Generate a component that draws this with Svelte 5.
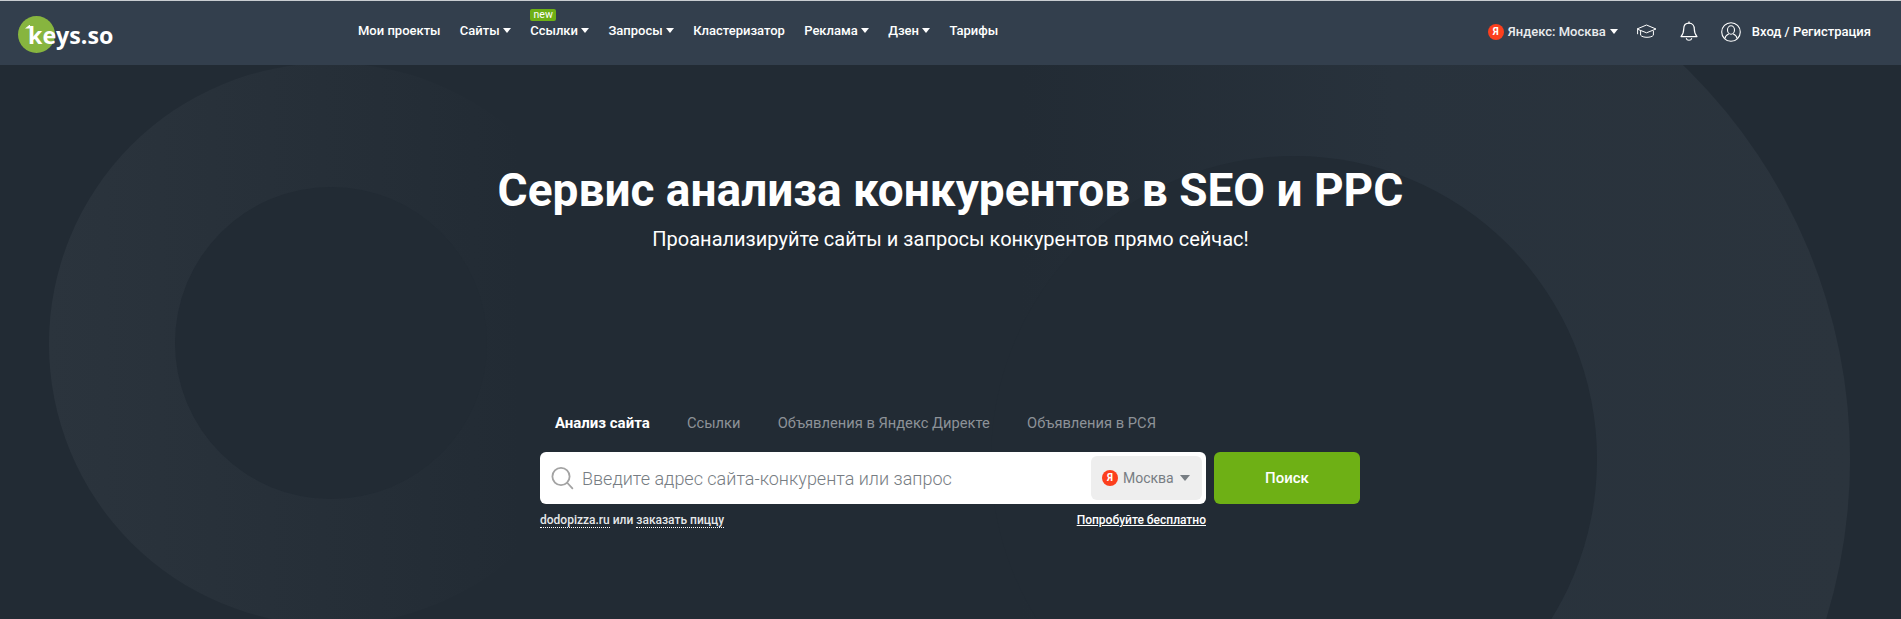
<script>
  const nav = [
    { label: "Мои проекты" },
    { label: "Сайты", caret: true },
    { label: "Ссылки", caret: true, badge: "new" },
    { label: "Запросы", caret: true },
    { label: "Кластеризатор" },
    { label: "Реклама", caret: true },
    { label: "Дзен", caret: true },
    { label: "Тарифы" },
  ];
  const tabs = ["Анализ сайта", "Ссылки", "Объявления в Яндекс Директе", "Объявления в РСЯ"];
</script>

<header class="topbar">
  <a class="logo" href="#top">
    <span class="logo-dot"></span>
    <span class="logo-flag"></span>
    <span class="logo-text">keys.so</span>
  </a>

  <nav class="menu">
    {#each nav as item}
      <a class="menu-item" href="#top">
        {#if item.badge}<span class="badge">{item.badge}</span>{/if}
        {item.label}
        {#if item.caret}<span class="caret"></span>{/if}
      </a>
    {/each}
  </nav>

  <div class="account">
    <span class="region">
      <span class="ya">Я</span>
      Яндекс: Москва
      <span class="caret"></span>
    </span>
    <svg class="hat" width="21" height="15" viewBox="0 0 21 15" fill="none" stroke="#fff" stroke-width="1">
      <path d="M10.5 1 1 5l9.5 3.8L20 5z" stroke-linejoin="round" />
      <path d="M4.6 6.8v4.4c2 2.8 10.8 2.8 12.8 0V6.8" />
      <path d="M1.6 5.4v4.8" />
    </svg>
    <svg class="bell" width="18" height="21" viewBox="0 0 18 21" fill="none" stroke="#fff" stroke-width="1.2">
      <path d="M9 2.2c-3.4 0-5.3 2.6-5.3 5.8 0 4-1 5.8-2.7 7.6h16c-1.7-1.8-2.7-3.6-2.7-7.6 0-3.2-1.9-5.8-5.3-5.8z" stroke-linejoin="round" />
      <path d="M9 .8v1.4M6.4 17.6c.5 2.2 4.7 2.2 5.2 0" stroke-linecap="round" />
    </svg>
    <svg class="user" width="20" height="20" viewBox="0 0 20 20" fill="none" stroke="#fff" stroke-width="1.1">
      <circle cx="10" cy="10" r="9.3" />
      <ellipse cx="10" cy="8" rx="3.5" ry="4.2" />
      <path d="M3.8 16.6c.6-2.8 2.4-4 4-4.6M16.2 16.6c-.6-2.8-2.4-4-4-4.6" />
    </svg>
    <a class="login" href="#top">Вход / Регистрация</a>
  </div>
</header>

<main class="hero">
  <svg class="rings" width="1901" height="554" viewBox="0 65 1901 554" fill="none" aria-hidden="true">
    <defs>
      <linearGradient id="fade-left" gradientUnits="userSpaceOnUse" x1="49" y1="0" x2="520" y2="0">
        <stop offset="0" stop-color="#2b343d" />
        <stop offset="0.35" stop-color="#28313a" />
        <stop offset="0.7" stop-color="#252e37" />
        <stop offset="1" stop-color="#222b34" />
      </linearGradient>
      <linearGradient id="fade-right" gradientUnits="userSpaceOnUse" x1="1850" y1="0" x2="1020" y2="0">
        <stop offset="0" stop-color="#2b343d" />
        <stop offset="0.55" stop-color="#28323c" />
        <stop offset="1" stop-color="#222b34" />
      </linearGradient>
    </defs>
    <circle cx="330" cy="344" r="281" fill="url(#fade-left)" />
    <circle cx="331" cy="343" r="156" fill="#222b34" />
    <circle cx="1302" cy="459" r="548" fill="url(#fade-right)" />
    <circle cx="1294" cy="459" r="303" fill="#222b34" />
  </svg>

  <div class="intro">
    <h1>Сервис анализа конкурентов в SEO и PPC</h1>
    <p>Проанализируйте сайты и запросы конкурентов прямо сейчас!</p>
  </div>

  <section class="finder">
    <div class="tabs">
      {#each tabs as tab, i}
        <span class="tab" class:active={i === 0}>{tab}</span>
      {/each}
    </div>

    <div class="search-row">
      <div class="search">
        <svg width="23" height="24" viewBox="0 0 23 24" fill="none" stroke="#a3a3a3" stroke-width="1.8">
          <circle cx="10" cy="10.5" r="8.6" />
          <path d="m16.4 17 5 5.4" stroke-linecap="round" />
        </svg>
        <input type="text" placeholder="Введите адрес сайта-конкурента или запрос" />
        <div class="city">
          <span class="ya">Я</span>
          <span>Москва</span>
          <span class="city-caret"></span>
        </div>
      </div>
      <button class="go">Поиск</button>
    </div>

    <div class="hints">
      <span><a class="dotted" href="#top">dodopizza.ru</a> или <a class="dotted" href="#top">заказать пиццу</a></span>
      <a class="try" href="#top">Попробуйте бесплатно</a>
    </div>
  </section>
</main>

<style>
  :global(body) {
    background: #222b34;
    font-family: Roboto, "Liberation Sans", sans-serif;
    color: #fff;
    overflow: hidden;
  }
  a {
    color: inherit;
    text-decoration: none;
  }

  .topbar {
    height: 64px;
    border-top: 1px solid #c9cdd1;
    background: #333f4d;
    display: flex;
    align-items: center;
    padding: 0 30px 0 18px;
    position: relative;
    z-index: 1;
  }

  .logo {
    position: relative;
    display: block;
    width: 100px;
    height: 37px;
    margin-top: 2px;
  }
  .logo-dot {
    position: absolute;
    left: 0;
    top: 0;
    width: 37px;
    height: 37px;
    border-radius: 50%;
    background: #87b53f;
  }
  .logo-flag {
    position: absolute;
    left: 7px;
    top: 9px;
    width: 5px;
    height: 4px;
    background: #fff;
    clip-path: polygon(100% 0, 100% 100%, 0 100%);
  }
  .logo-text {
    position: absolute;
    left: 10px;
    top: 2px;
    font-family: "Open Sans", sans-serif;
    font-weight: 700;
    font-size: 23.2px;
    line-height: 34px;
  }

  .menu {
    display: flex;
    gap: 19.25px;
    margin-left: 240px;
    margin-top: -4px;
  }
  .menu-item {
    position: relative;
    font-size: 13px;
    font-weight: 500;
    line-height: 18px;
    white-space: nowrap;
  }
  .badge {
    position: absolute;
    left: 0;
    top: -13px;
    width: 26px;
    height: 12px;
    border-radius: 2px;
    background: #6eb015;
    font-size: 10.5px;
    font-weight: 400;
    line-height: 12px;
    text-align: center;
  }
  .caret {
    display: inline-block;
    width: 0;
    height: 0;
    border: 4px solid transparent;
    border-top: 5px solid #fff;
    border-bottom: 0;
    vertical-align: 2px;
  }

  .account {
    margin-left: auto;
    display: flex;
    align-items: center;
    margin-top: -3px;
  }
  .region {
    display: flex;
    align-items: center;
    gap: 4px;
    font-size: 13px;
    font-weight: 500;
    color: #e9ebed;
    white-space: nowrap;
  }
  .ya {
    width: 16px;
    height: 16px;
    border-radius: 50%;
    background: #fc3f1d;
    color: #fff;
    font-size: 10px;
    font-weight: 700;
    line-height: 16px;
    text-align: center;
    flex: none;
  }
  .hat {
    margin-left: 18px;
  }
  .bell {
    margin-left: 23px;
  }
  .user {
    margin-left: 23px;
  }
  .login {
    margin-left: 11px;
    font-size: 13px;
    font-weight: 500;
    white-space: nowrap;
  }

  .hero {
    position: relative;
    height: 554px;
    overflow: hidden;
  }
  .rings {
    position: absolute;
    left: 0;
    top: 0;
  }

  .intro {
    position: relative;
    padding-top: 97px;
    text-align: center;
  }
  h1 {
    margin: 0;
    font-size: 46px;
    font-weight: 700;
    line-height: 56px;
  }
  p {
    margin: 7px 0 0;
    font-size: 20px;
    line-height: 28px;
  }

  .finder {
    position: relative;
    width: 820px;
    margin: 161px 0 0 540px;
  }
  .tabs {
    display: flex;
    gap: 37.2px;
    padding-left: 15px;
    font-size: 14.7px;
    line-height: 18px;
    color: #8d9298;
  }
  .tab.active {
    color: #fff;
    font-size: 15px;
    font-weight: 700;
  }

  .search-row {
    display: flex;
    gap: 8px;
    margin-top: 20px;
  }
  .search {
    width: 666px;
    height: 52px;
    box-sizing: border-box;
    padding: 4px 4px 4px 11px;
    border-radius: 6px;
    background: #fff;
    display: flex;
    align-items: center;
  }
  input {
    flex: 1;
    min-width: 0;
    margin-left: 8px;
    border: 0;
    outline: 0;
    padding: 0;
    background: none;
    font-family: inherit;
    font-size: 18px;
    font-weight: 300;
  }
  input::placeholder {
    color: #777d83;
    opacity: 1;
  }
  .city {
    width: 111px;
    height: 44px;
    box-sizing: border-box;
    padding-left: 11px;
    border-radius: 6px;
    background: #eee;
    color: #777d83;
    font-size: 14px;
    display: flex;
    align-items: center;
    gap: 5px;
  }
  .city-caret {
    margin-left: 1px;
    width: 0;
    height: 0;
    border: 5.5px solid transparent;
    border-top: 6px solid #777d83;
    border-bottom: 0;
  }
  .go {
    width: 146px;
    height: 52px;
    border: 0;
    border-radius: 6px;
    background: #6eb015;
    color: #fff;
    font-family: inherit;
    font-size: 15px;
    font-weight: 500;
  }

  .hints {
    width: 666px;
    display: flex;
    justify-content: space-between;
    margin-top: 9px;
    font-size: 12px;
    font-weight: 500;
    line-height: 15px;
    color: #e6e8ea;
  }
  .dotted {
    border-bottom: 1px dotted #fff;
  }
  .try {
    color: #fff;
    text-decoration: underline;
  }
</style>
